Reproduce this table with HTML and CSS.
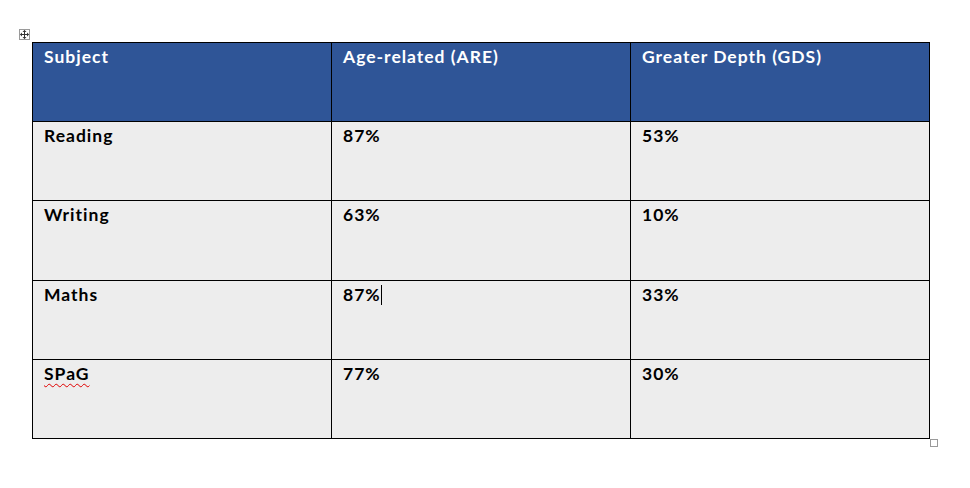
FILE: index.html
```html
<!DOCTYPE html>
<html>
<head>
<meta charset="utf-8">
<link rel="stylesheet" href="styles.css">
</head>
<body>
<div class="page">
  <div class="table-wrap">
    <span class="move-handle">
      <svg width="9" height="9" viewBox="0 0 9 9">
        <path d="M4.5 0.5 V8.5 M0.5 4.5 H8.5" stroke="#333" stroke-width="1" fill="none"/>
        <path d="M4.5 0 L2.5 2 H6.5 Z M4.5 9 L2.5 7 H6.5 Z M0 4.5 L2 2.5 V6.5 Z M9 4.5 L7 2.5 V6.5 Z" fill="#333"/>
      </svg>
    </span>
    <table class="data">
      <tr class="head">
        <td>Subject</td>
        <td>Age-related (ARE)</td>
        <td>Greater Depth (GDS)</td>
      </tr>
      <tr>
        <td>Reading</td>
        <td>87%</td>
        <td>53%</td>
      </tr>
      <tr class="tall">
        <td>Writing</td>
        <td>63%</td>
        <td>10%</td>
      </tr>
      <tr>
        <td>Maths</td>
        <td>87%<span class="caret"></span></td>
        <td>33%</td>
      </tr>
      <tr>
        <td><span class="misspelt">SPaG</span></td>
        <td>77%</td>
        <td>30%</td>
      </tr>
    </table>
    <span class="resize-handle"></span>
  </div>
</div>
</body>
</html>
```

FILE: styles.css
```css
html, body {
  margin: 0;
  padding: 0;
  background: #ffffff;
}

.page {
  padding: 42px 0 50px 32px;
  min-height: 488px;
  box-sizing: border-box;
}

.table-wrap {
  position: relative;
  display: block;
  width: 898px;
}

.data {
  border-collapse: collapse;
  table-layout: fixed;
  width: 898px;
  font-family: Lato, "Open Sans", sans-serif;
  font-weight: 700;
  font-size: 17.5px;
  letter-spacing: 1px;
  color: #000;
}

.data td {
  width: 299px;
  height: 79px;
  border: 1px solid #000;
  padding: 3px 11px 0 11px;
  vertical-align: top;
  background: #ededed;
  box-sizing: border-box;
  line-height: 21px;
}

.data tr.tall td {
  height: 80px;
}

.data tr.head td {
  background: #2f5597;
  color: #ffffff;
}

.caret {
  display: inline-block;
  width: 1px;
  height: 20px;
  background: #000;
  vertical-align: -4px;
}

.misspelt {
  text-decoration: underline wavy #e00000;
  text-decoration-thickness: 1px;
  text-underline-offset: 3px;
}

.move-handle {
  position: absolute;
  left: -13px;
  top: -13px;
  width: 11px;
  height: 11px;
  border: 1px solid #9a9a9a;
  box-sizing: border-box;
  background: #fff;
  display: flex;
  align-items: center;
  justify-content: center;
}

.resize-handle {
  position: absolute;
  left: 898px;
  bottom: -8px;
  width: 8px;
  height: 8px;
  border: 1px solid #9a9a9a;
  box-sizing: border-box;
  background: #fff;
  z-index: 2;
}
```
